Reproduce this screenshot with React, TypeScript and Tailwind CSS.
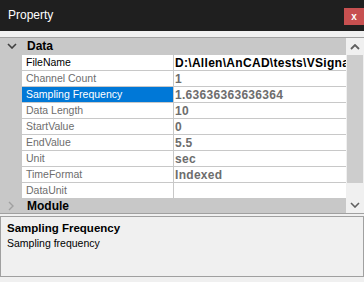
import React from "react";

type Row = { name: string; value: string; dark?: boolean; selected?: boolean };

const rows: Row[] = [
  { name: "FileName", value: "D:\\Allen\\AnCAD\\tests\\VSignal.txt", dark: true },
  { name: "Channel Count", value: "1" },
  { name: "Sampling Frequency", value: "1.63636363636364", selected: true },
  { name: "Data Length", value: "10" },
  { name: "StartValue", value: "0" },
  { name: "EndValue", value: "5.5" },
  { name: "Unit", value: "sec" },
  { name: "TimeFormat", value: "Indexed" },
  { name: "DataUnit", value: "" },
];

function Chevron({ dir, color }: { dir: "down" | "right" | "up"; color: string }) {
  if (dir === "down")
    return (
      <svg width="10" height="6" viewBox="0 0 10 6">
        <polyline points="1,1 5,5 9,1" fill="none" stroke={color} strokeWidth="1.6" />
      </svg>
    );
  if (dir === "up")
    return (
      <svg width="10" height="6" viewBox="0 0 10 6">
        <polyline points="1,5 5,1 9,5" fill="none" stroke={color} strokeWidth="1.8" />
      </svg>
    );
  return (
    <svg width="6" height="10" viewBox="0 0 6 10">
      <polyline points="1,1 5,5 1,9" fill="none" stroke={color} strokeWidth="1.4" />
    </svg>
  );
}

export default function App() {
  return (
    <div
      className="w-[364px] h-[282px] bg-[#f0f0f0] flex flex-col overflow-hidden"
      style={{ fontFamily: '"Liberation Sans", Arial, sans-serif' }}
    >
      {/* Title bar */}
      <div className="h-[31px] bg-[#1f1f1f] flex justify-between shrink-0">
        <div className="text-white text-[12px] pl-[8px] pt-[8px] leading-[15px]">Property</div>
        <div className="mt-[8px] w-[20px] h-[17px] bg-[#c75050] flex items-center justify-center">
          <span className="text-white text-[10px] font-bold leading-none">x</span>
        </div>
      </div>
      <div className="h-[6px] shrink-0" />
      {/* Grid */}
      <div className="border-t border-b border-[#a0a0a0] flex shrink-0">
        <div className="w-[346px] flex flex-col">
          <div className="h-[16px] bg-[#c8c8c8] flex items-center">
            <div className="w-[22px] flex justify-center pl-[1px]">
              <Chevron dir="down" color="#404040" />
            </div>
            <span className="text-[12px] font-bold text-black pl-[5px] leading-none">Data</span>
          </div>
          {rows.map((r) => (
            <div key={r.name} className="h-[16px] flex bg-[#c8c8c8]">
              <div className="w-[22px] shrink-0" />
              <div className="flex-1 flex border-t border-[#c8c8c8] bg-white">
                <div
                  className={`w-[152px] shrink-0 flex items-center pl-[4px] text-[10.5px] whitespace-nowrap border-r border-[#c8c8c8] ${
                    r.selected ? "bg-[#0078d7] text-white" : r.dark ? "text-black" : "text-[#6d6d6d]"
                  }`}
                >
                  {r.name}
                </div>
                <div
                  className={`flex-1 overflow-hidden flex items-center pl-[1px] text-[12px] font-bold whitespace-nowrap tracking-[0.3px] ${
                    r.dark ? "text-black" : "text-[#6d6d6d]"
                  }`}
                >
                  {r.value}
                </div>
              </div>
            </div>
          ))}
          <div className="h-[15px] bg-[#c8c8c8] flex items-center">
            <div className="w-[22px] flex justify-center">
              <Chevron dir="right" color="#a0a0a0" />
            </div>
            <span className="text-[12px] font-bold text-black pl-[5px] leading-none">Module</span>
          </div>
        </div>
        {/* Scrollbar */}
        <div className="w-[18px] flex flex-col bg-[#f0f0f0]">
          <div className="h-[17px] flex items-center justify-center">
            <Chevron dir="up" color="#606060" />
          </div>
          <div className="h-[128px] bg-[#cdcdcd] mx-[1px]" />
          <div className="flex-1" />
          <div className="h-[17px] flex items-center justify-center">
            <Chevron dir="down" color="#606060" />
          </div>
        </div>
      </div>
      <div className="h-[2px] shrink-0" />
      {/* Description */}
      <div className="h-[61px] border border-[#a0a0a0] bg-[#f0f0f0] px-[6px] pt-[3px] shrink-0">
        <div className="text-[11.5px] font-bold text-black leading-[16px]">Sampling Frequency</div>
        <div className="text-[10.5px] text-black leading-[15px]">Sampling frequency</div>
      </div>
    </div>
  );
}
